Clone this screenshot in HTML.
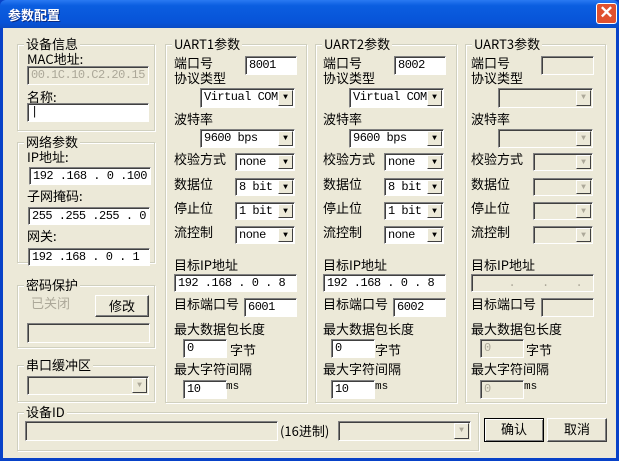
<!DOCTYPE html><html><head><meta charset="utf-8"><style>
*{box-sizing:border-box;margin:0;padding:0}
body{width:619px;height:461px;overflow:hidden;background:#0842c8;font-family:"Liberation Sans","Noto Sans CJK SC",sans-serif;font-size:12px;color:#000;position:relative}
.tb{position:absolute;left:0;top:0;width:619px;height:28px;background:linear-gradient(#2a7af2 0%,#0b5ee0 20%,#0753d8 80%,#0a4cc4 100%);border-radius:6px 6px 0 0}
.tt{position:absolute;left:8px;top:5px;color:#fff;font-weight:bold;font-size:13px;text-shadow:1px 1px #0a2a80;font-family:"Noto Sans CJK SC",sans-serif}
.cl{position:absolute;left:596px;top:3px;width:21px;height:21px;background:#e0512f;border:1px solid #fff;border-radius:3px;color:#fff;font-size:17px;line-height:18px;text-align:center;font-weight:bold}
.bd{position:absolute;left:3px;top:28px;width:613px;height:430px;background:#ece9d8}
.g{position:absolute;border:1px solid #d0d0bf;box-shadow:1px 1px 0 #fff inset,1px 1px 0 #fff}
.gl{position:absolute;top:-10px;left:6px;background:#ece9d8;padding:0 2px;font-family:"Noto Sans CJK SC",sans-serif;font-size:13px;line-height:17px}
.t{position:absolute;font-family:"Noto Sans CJK SC",sans-serif;font-size:13px;line-height:14px;white-space:nowrap}
.i{position:absolute;background:#fff;border-top:1px solid #808080;border-left:1px solid #808080;border-right:1px solid #fff;border-bottom:1px solid #fff;box-shadow:1px 1px 0 #404040 inset;font-family:"Liberation Mono",monospace;font-size:12px;letter-spacing:-0.5px;line-height:16px;padding-left:3px;white-space:nowrap;overflow:hidden}
.dis{background:#ece9d8;color:#aca899}
.cb .ar{position:absolute;right:1px;top:1px;bottom:1px;width:15px;background:#ece9d8;border:1px solid;border-color:#fff #404040 #404040 #fff;font-size:8px;letter-spacing:0;text-align:center;line-height:13px;color:#000}
.dis .ar{color:#aca899}
.btn{position:absolute;background:#ece9d8;border:1px solid;border-color:#fff #404040 #404040 #fff;box-shadow:-1px -1px 0 #808080 inset;text-align:center;font-family:"Noto Sans CJK SC",sans-serif;font-size:13px;line-height:20px}
.gr{color:#aca899}
.ms{font-family:'Liberation Mono',monospace;font-size:11px}
</style></head><body>
<div class="tb"><div class="tt">参数配置</div><div class="cl">✕</div></div>
<div class="bd"></div>

<div class="g" style="left:17px;top:44px;width:138px;height:87px"><span class="gl">设备信息</span></div>
<div class="t" style="left:27px;top:52px">MAC地址:</div>
<div class="i dis" style="left:27px;top:66px;width:122px;height:19px;color:#aca899">00.1C.10.C2.20.15</div>
<div class="t" style="left:27px;top:90px">名称:</div>
<div class="i" style="left:27px;top:103px;width:122px;height:19px">|</div>

<div class="g" style="left:17px;top:142px;width:138px;height:121px"><span class="gl">网络参数</span></div>
<div class="t" style="left:27px;top:150px">IP地址:</div>
<div class="i" style="left:29px;top:167px;width:122px;height:18px">192 .168 . 0 .100</div>
<div class="t" style="left:27px;top:189px">子网掩码:</div>
<div class="i" style="left:28px;top:207px;width:122px;height:18px">255 .255 .255 . 0</div>
<div class="t" style="left:27px;top:229px">网关:</div>
<div class="i" style="left:28px;top:248px;width:122px;height:18px">192 .168 . 0 . 1</div>

<div class="g" style="left:17px;top:285px;width:138px;height:63px"><span class="gl">密码保护</span></div>
<div class="t gr" style="left:31px;top:296px">已关闭</div>
<div class="btn" style="left:95px;top:295px;width:54px;height:22px">修改</div>
<div class="i dis" style="left:27px;top:323px;width:123px;height:20px"></div>

<div class="g" style="left:17px;top:365px;width:138px;height:37px"><span class="gl">串口缓冲区</span></div>
<div class="i dis cb" style="left:27px;top:376px;width:122px;height:19px"><div class="ar">▼</div></div>

<div class="g" style="left:17px;top:412px;width:462px;height:39px"><span class="gl">设备ID</span></div>
<div class="i dis" style="left:25px;top:421px;width:253px;height:20px"></div>
<div class="t" style="left:280px;top:424px">(16进制)</div>
<div class="i dis cb" style="left:338px;top:421px;width:133px;height:20px"><div class="ar">▼</div></div>

<div class="btn" style="left:484px;top:418px;width:60px;height:24px;border-color:#000;box-shadow:1px 1px 0 #fff inset,-1px -1px 0 #808080 inset">确认</div>
<div class="btn" style="left:547px;top:418px;width:60px;height:24px">取消</div>

<div class="g" style="left:165px;top:44px;width:142px;height:359px"><span class="gl">UART1参数</span></div>
<div class="t" style="left:174px;top:56px">端口号</div>
<div class="i" style="left:245px;top:56px;width:52px;height:19px">8001</div>
<div class="t" style="left:174px;top:71px">协议类型</div>
<div class="i cb" style="left:200px;top:88px;width:95px;height:20px">Virtual COM<div class="ar">▼</div></div>
<div class="t" style="left:174px;top:112px">波特率</div>
<div class="i cb" style="left:200px;top:129px;width:95px;height:19px">9600 bps<div class="ar">▼</div></div>
<div class="t" style="left:174px;top:152px">校验方式</div>
<div class="i cb" style="left:235px;top:153px;width:60px;height:18px">none<div class="ar">▼</div></div>
<div class="t" style="left:174px;top:177px">数据位</div>
<div class="i cb" style="left:235px;top:178px;width:60px;height:18px">8 bit<div class="ar">▼</div></div>
<div class="t" style="left:174px;top:201px">停止位</div>
<div class="i cb" style="left:235px;top:202px;width:60px;height:18px">1 bit<div class="ar">▼</div></div>
<div class="t" style="left:174px;top:225px">流控制</div>
<div class="i cb" style="left:235px;top:226px;width:60px;height:18px">none<div class="ar">▼</div></div>
<div class="t" style="left:174px;top:258px">目标IP地址</div>
<div class="i" style="left:174px;top:274px;width:123px;height:18px">192 .168 . 0 . 8</div>
<div class="t" style="left:174px;top:297px">目标端口号</div>
<div class="i" style="left:244px;top:298px;width:53px;height:19px">6001</div>
<div class="t" style="left:174px;top:322px">最大数据包长度</div>
<div class="i" style="left:183px;top:339px;width:44px;height:19px">0</div>
<div class="t" style="left:230px;top:343px">字节</div>
<div class="t" style="left:174px;top:362px">最大字符间隔</div>
<div class="i" style="left:183px;top:380px;width:44px;height:19px">10</div>
<div class="t ms" style="left:226px;top:380px">ms</div>

<div class="g" style="left:315px;top:44px;width:142px;height:359px"><span class="gl">UART2参数</span></div>
<div class="t" style="left:323px;top:56px">端口号</div>
<div class="i" style="left:394px;top:56px;width:52px;height:19px">8002</div>
<div class="t" style="left:323px;top:71px">协议类型</div>
<div class="i cb" style="left:349px;top:88px;width:95px;height:20px">Virtual COM<div class="ar">▼</div></div>
<div class="t" style="left:323px;top:112px">波特率</div>
<div class="i cb" style="left:349px;top:129px;width:95px;height:19px">9600 bps<div class="ar">▼</div></div>
<div class="t" style="left:323px;top:152px">校验方式</div>
<div class="i cb" style="left:384px;top:153px;width:60px;height:18px">none<div class="ar">▼</div></div>
<div class="t" style="left:323px;top:177px">数据位</div>
<div class="i cb" style="left:384px;top:178px;width:60px;height:18px">8 bit<div class="ar">▼</div></div>
<div class="t" style="left:323px;top:201px">停止位</div>
<div class="i cb" style="left:384px;top:202px;width:60px;height:18px">1 bit<div class="ar">▼</div></div>
<div class="t" style="left:323px;top:225px">流控制</div>
<div class="i cb" style="left:384px;top:226px;width:60px;height:18px">none<div class="ar">▼</div></div>
<div class="t" style="left:323px;top:258px">目标IP地址</div>
<div class="i" style="left:323px;top:274px;width:123px;height:18px">192 .168 . 0 . 8</div>
<div class="t" style="left:323px;top:297px">目标端口号</div>
<div class="i" style="left:393px;top:298px;width:53px;height:19px">6002</div>
<div class="t" style="left:323px;top:322px">最大数据包长度</div>
<div class="i" style="left:331px;top:339px;width:44px;height:19px">0</div>
<div class="t" style="left:375px;top:343px">字节</div>
<div class="t" style="left:323px;top:362px">最大字符间隔</div>
<div class="i" style="left:331px;top:380px;width:44px;height:19px">10</div>
<div class="t ms" style="left:375px;top:380px">ms</div>

<div class="g" style="left:465px;top:44px;width:141px;height:359px"><span class="gl">UART3参数</span></div>
<div class="t" style="left:471px;top:56px">端口号</div>
<div class="i dis" style="left:541px;top:56px;width:53px;height:19px"></div>
<div class="t" style="left:471px;top:71px">协议类型</div>
<div class="i dis cb" style="left:498px;top:88px;width:95px;height:20px"><div class="ar">▼</div></div>
<div class="t" style="left:471px;top:112px">波特率</div>
<div class="i dis cb" style="left:498px;top:129px;width:95px;height:19px"><div class="ar">▼</div></div>
<div class="t" style="left:471px;top:152px">校验方式</div>
<div class="i dis cb" style="left:533px;top:153px;width:60px;height:18px"><div class="ar">▼</div></div>
<div class="t" style="left:471px;top:177px">数据位</div>
<div class="i dis cb" style="left:533px;top:178px;width:60px;height:18px"><div class="ar">▼</div></div>
<div class="t" style="left:471px;top:201px">停止位</div>
<div class="i dis cb" style="left:533px;top:202px;width:60px;height:18px"><div class="ar">▼</div></div>
<div class="t" style="left:471px;top:225px">流控制</div>
<div class="i dis cb" style="left:533px;top:226px;width:60px;height:18px"><div class="ar">▼</div></div>
<div class="t" style="left:471px;top:258px">目标IP地址</div>
<div class="i dis" style="left:471px;top:274px;width:123px;height:18px">&nbsp;&nbsp;&nbsp;&nbsp;&nbsp;.&nbsp;&nbsp;&nbsp;&nbsp;.&nbsp;&nbsp;&nbsp;&nbsp;.</div>
<div class="t" style="left:471px;top:297px">目标端口号</div>
<div class="i dis" style="left:541px;top:298px;width:53px;height:19px"></div>
<div class="t" style="left:471px;top:322px">最大数据包长度</div>
<div class="i dis" style="left:480px;top:339px;width:44px;height:19px">0</div>
<div class="t" style="left:526px;top:343px">字节</div>
<div class="t" style="left:471px;top:362px">最大字符间隔</div>
<div class="i dis" style="left:480px;top:380px;width:44px;height:19px">0</div>
<div class="t ms" style="left:524px;top:380px">ms</div>
</body></html>
